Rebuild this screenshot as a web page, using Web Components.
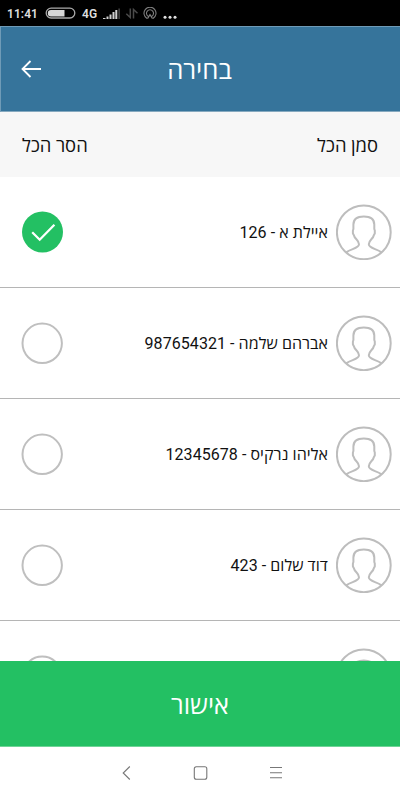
<!DOCTYPE html>
<html lang="he">
<head>
<meta charset="utf-8">
<title>בחירה</title>
<style>
html,body{margin:0;padding:0;height:100%}
body{width:400px;height:800px;overflow:hidden;background:#fff;font-family:Roboto,"Open Sans","Noto Sans",sans-serif}
</style>
</head>
<body>
<selection-screen></selection-screen>
<script>
function define(name, html) {
  const template = document.createElement('template');
  template.innerHTML = html;
  customElements.define(name, class extends HTMLElement {
    constructor() {
      super();
      this.attachShadow({ mode: 'open' }).append(template.content.cloneNode(true));
    }
  });
}

define('status-bar', `
<style>
:host{display:flex;align-items:center;height:26px;box-sizing:border-box;padding:2px 0 0 7px;background:#000;color:#dedede;font-size:12px;font-weight:600;letter-spacing:.05px}
svg{display:block;flex:none}
.time{width:38px}.net{width:21px;margin-left:6px}
</style>
<span class="time">11:41</span>
<svg width="31" height="14" viewBox="0 0 31 14"><rect x="1.200" y="1.200" width="28.600" height="9.800" rx="4.900" fill="none" stroke="#aaa" stroke-width="1.300"/><path d="M6 3h13.500v6.400H6a3.200 3.200 0 0 1 0-6.400z" fill="#d8d8d8"/></svg>
<span class="net">4G</span>
<svg width="78" height="14" viewBox="0 0 78 14">
<g fill="#d0d0d0"><path d="M0 12V11H2.500V12zM3.500 12V9.500H5.500V12zM6.500 12V7.500H8.500V12zM9.500 12V5H11.500V12zM12.300 12V3H14.300V12z"/><path d="M15.300 12V1.500H17V12z" fill="#3c3c3c"/></g>
<g fill="none" stroke="#4a4a4a" stroke-width="1.500"><path d="M27.300 1.500V10.500L23.300 6.800M30.500 11.500V2.500L34.500 6.200"/></g>
<g fill="none" stroke="#808080" stroke-width="1.100"><path d="M44 11.400a6 6 0 1 1 6 0M45.400 9.400a3.500 3.500 0 1 1 3.200 0M44.500 11.600l2.500-4 2.500 4"/></g>
<g fill="#e0e0e0"><circle cx="62" cy="10.300" r="1.500"/><circle cx="67" cy="10.300" r="1.500"/><circle cx="72" cy="10.300" r="1.500"/></g>
</svg>`);

define('app-header', `
<style>
:host{display:grid;grid-template-columns:60px 1fr 60px;align-items:center;height:86px;box-sizing:border-box;background:#36749b;color:#fff;border:1px solid #6f9bb7;border-right:0;border-bottom-color:#86a9bf}
svg{display:block;margin-left:20px}
.title{text-align:center;font-size:25.700px;line-height:34px;direction:rtl;padding:2px 2px 0 0}
</style>
<svg width="21" height="18" viewBox="0 0 21 18" fill="none" stroke="#fff" stroke-width="1.800"><path d="M20 9H1.500M9.500 1L1.500 9l8 8"/></svg>
<div class="title"><slot></slot></div>`);

define('bulk-actions', `
<style>
:host{display:flex;justify-content:space-between;align-items:center;height:65px;box-sizing:border-box;padding:0 22px;background:#f7f7f7;color:#111;font-size:18.400px;direction:rtl}
</style>
<slot name="all"></slot><slot name="none"></slot>`);

define('check-circle', `
<style>
:host{display:block;width:42px;height:42px}
svg{display:block}
.on{display:none}
:host([checked]) .on{display:block}
:host([checked]) .off{display:none}
</style>
<svg width="42" height="42" viewBox="0 0 42 42" fill="none"><circle class="off" cx="21.200" cy="21.300" r="19.700" stroke="#bfbfbf" stroke-width="2"/><g class="on"><circle cx="21.500" cy="21" r="20.500" fill="#23c063"/><path d="M11.200 21.300l7.500 7.400L33.400 13.800" stroke="#fff" stroke-width="2.300"/></g></svg>`);

define('user-avatar', `
<style>:host{display:block;width:56px;height:56px}svg{display:block}</style>
<svg width="56" height="56" viewBox="0 0 56 56" fill="none" stroke="#bdbdbd" stroke-width="2" stroke-linejoin="round"><circle cx="27.800" cy="28.300" r="26.900"/><path d="M10.200 48.300C15.500 44.700 23 44.200 23 40.300C23 36 18.500 35 17.800 31L16.900 29.500V26.500L17.400 25V20.500C17.400 15 20.800 12.500 27.800 12.500S38.300 15 38.300 20.500V25L38.800 26.500V29.500L37.900 31C37.200 35 32.800 36 32.800 40.300C32.800 44.200 40.200 44.700 45.500 48.300"/></svg>`);

class PersonRow extends HTMLElement {
  constructor() {
    super();
    this.attachShadow({ mode: 'open' }).innerHTML = `
<style>
:host{display:flex;flex:none;align-items:center;height:111px;box-sizing:border-box;padding:0 8px 0 21px;border-bottom:1px solid #b5b5b5;background:#fff;color:#111}
.name{flex:1;direction:rtl;font-size:16px;letter-spacing:.06px;line-height:22px;padding:1px 8px 0 0;white-space:nowrap}
</style>
<check-circle ${this.hasAttribute('checked') ? 'checked' : ''}></check-circle>
<div class="name"><slot></slot></div>
<user-avatar></user-avatar>`;
  }
}

define('confirm-button', `
<style>
:host{display:flex;justify-content:center;align-items:center;height:86px;box-sizing:border-box;padding-top:1px;background:#23c063;border-bottom:1px solid #6fd497;color:#fff;font-size:25.300px;direction:rtl}
</style><slot></slot>`);

define('nav-bar', `
<style>
:host{display:flex;justify-content:center;align-items:center;height:53px;box-sizing:border-box;padding-bottom:1px;background:#fff}
svg{display:block}
</style>
<svg width="170" height="16" viewBox="-5 0 170 16" fill="none" stroke="#777" stroke-width="1.100"><path d="M9.800 1.500L3.200 8l6.600 6.500"/><rect x="74.300" y="1.700" width="12.500" height="12.500" rx="2"/><path d="M150 2.500h12M150 7.700h12M150 12.700h12"/></svg>`);

define('selection-screen', `
<style>
:host{display:flex;flex-direction:column;width:400px;height:800px;overflow:hidden}
.list{flex:1;min-height:0;overflow:hidden;display:flex;flex-direction:column}
</style>
<status-bar></status-bar>
<app-header>בחירה</app-header>
<bulk-actions><span slot="all">סמן הכל</span><span slot="none">הסר הכל</span></bulk-actions>
<div class="list">
<person-row checked>איילת א - 126</person-row>
<person-row>אברהם שלמה - 987654321</person-row>
<person-row>אליהו נרקיס - 12345678</person-row>
<person-row>דוד שלום - 423</person-row>
<person-row></person-row>
</div>
<confirm-button>אישור</confirm-button>
<nav-bar></nav-bar>`);
customElements.define('person-row', PersonRow);
</script>
</body>
</html>
